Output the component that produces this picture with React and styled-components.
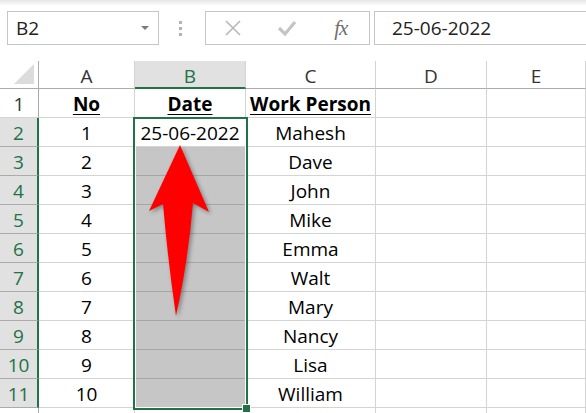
import React from "react";
import styled, { createGlobalStyle } from "styled-components";

const GlobalStyle = createGlobalStyle`
  html, body {
    margin: 0;
    padding: 0;
    background: #fff;
  }
  body {
    width: 586px;
    height: 413px;
    overflow: hidden;
    font-family: "Open Sans", Lato, sans-serif;
  }
`;

const GREEN = "#217346";
const GRID = "#d4d4d4";

const Page = styled.div`
  position: relative;
  width: 586px;
  height: 413px;
  overflow: hidden;
  background: linear-gradient(#e6e6e6 0px, #fff 6px);
`;

/* formula bar */
const Toolbar = styled.div`
  display: flex;
  align-items: center;
  height: 61px;
  padding: 0 0 5px 7px;
  box-sizing: border-box;
`;

const NameBox = styled.div`
  display: flex;
  align-items: center;
  justify-content: space-between;
  width: 152px;
  height: 34px;
  box-sizing: border-box;
  border: 1px solid #c6c6c6;
  background: #fff;
  padding: 0 9px 0 8px;
  font-size: 19px;
  color: #222;
`;

const Caret = styled.span`
  width: 0;
  height: 0;
  border-left: 4px solid transparent;
  border-right: 4px solid transparent;
  border-top: 4px solid #7a7a7a;
`;

const Grip = styled.div`
  display: flex;
  flex-direction: column;
  gap: 3px;
  margin: 0 23px 0 20px;
  span {
    width: 3px;
    height: 3px;
    background: #b2b2b2;
  }
`;

const ActionBox = styled.div`
  display: flex;
  align-items: center;
  width: 165px;
  height: 34px;
  box-sizing: border-box;
  border: 1px solid #c6c6c6;
  background: #fff;
`;

const Action = styled.div`
  flex: 1;
  display: flex;
  align-items: center;
  justify-content: center;
`;

const Fx = styled.span`
  font-family: "Liberation Serif", serif;
  font-style: italic;
  font-size: 21px;
  color: #6f6f6f;
  letter-spacing: -1px;
  margin-right: 2px;
`;

const FormulaBox = styled.div`
  flex: 1;
  height: 34px;
  margin-left: 4px;
  box-sizing: border-box;
  border: 1px solid #c6c6c6;
  border-right: none;
  background: #fff;
  display: flex;
  align-items: center;
  padding-left: 17px;
  font-size: 19px;
  color: #222;
`;

/* sheet grid */
const Sheet = styled.div`
  display: grid;
  grid-template-columns: 39px 96px 111px 130px 111px 1fr;
  grid-template-rows: 28px repeat(12, 29px);
  background: #fff;
`;

const Corner = styled.div`
  position: relative;
  border-right: 1px solid #ababab;
  border-bottom: 1px solid #ababab;
  &::after {
    content: "";
    position: absolute;
    right: 4px;
    bottom: 4px;
    border-left: 20px solid transparent;
    border-bottom: 20px solid #dcdcdc;
  }
`;

const ColHead = styled.div`
  display: flex;
  align-items: center;
  justify-content: center;
  font-size: 19px;
  padding-top: 3px;
  box-sizing: border-box;
  color: ${(p) => (p.$active ? GREEN : "#333")};
  background: ${(p) => (p.$active ? "#e1e1e1" : "#fff")};
  border-right: 1px solid ${GRID};
  border-bottom: ${(p) => (p.$active ? `2px solid ${GREEN}` : "1px solid #ababab")};
`;

const RowHead = styled.div`
  display: flex;
  align-items: center;
  justify-content: center;
  font-size: 19px;
  padding-top: 2px;
  box-sizing: border-box;
  color: ${(p) => (p.$active ? GREEN : "#333")};
  background: ${(p) => (p.$active ? "#e1e1e1" : "#fff")};
  border-right: ${(p) => (p.$active ? `2px solid ${GREEN}` : "1px solid #ababab")};
  border-bottom: 1px solid ${(p) => (p.$active ? "#ababab" : GRID)};
`;

const Cell = styled.div`
  display: flex;
  align-items: center;
  justify-content: center;
  font-size: 19px;
  padding-top: 2px;
  box-sizing: border-box;
  color: #000;
  background: ${(p) => (p.$shaded ? "#c6c6c6" : "#fff")};
  border-right: 1px solid ${GRID};
  border-bottom: 1px solid ${(p) => (p.$shaded ? "#a6a6a6" : GRID)};
  white-space: nowrap;
  overflow: hidden;
  font-weight: ${(p) => (p.$head ? 700 : 400)};
  text-decoration: ${(p) => (p.$head ? "underline" : "none")};
  text-underline-offset: 3px;
  text-decoration-thickness: 1px;
`;

/* selection outline and fill handle sit over the cells */
const Selection = styled.div`
  position: absolute;
  left: 133px;
  top: 117px;
  width: 115px;
  height: 293px;
  box-sizing: border-box;
  border: 2px solid ${GREEN};
  box-shadow: inset 0 0 0 1px #fff;
  pointer-events: none;
`;

const Handle = styled.div`
  position: absolute;
  right: -5px;
  bottom: -5px;
  width: 7px;
  height: 7px;
  background: ${GREEN};
  border: 1px solid #fff;
`;

const Overlay = styled.svg`
  position: absolute;
  left: 0;
  top: 0;
  pointer-events: none;
  filter: drop-shadow(2px 2px 2px rgba(0, 0, 0, 0.35));
`;

const columns = ["A", "B", "C", "D", "E"];
const people = [
  ["1", "25-06-2022", "Mahesh"],
  ["2", "", "Dave"],
  ["3", "", "John"],
  ["4", "", "Mike"],
  ["5", "", "Emma"],
  ["6", "", "Walt"],
  ["7", "", "Mary"],
  ["8", "", "Nancy"],
  ["9", "", "Lisa"],
  ["10", "", "William"],
];

export default function App() {
  return (
    <Page>
      <GlobalStyle />
      <Toolbar>
        <NameBox>
          B2
          <Caret />
        </NameBox>
        <Grip>
          <span />
          <span />
          <span />
        </Grip>
        <ActionBox>
          <Action>
            <svg width="18" height="18" viewBox="0 0 18 18">
              <path d="M2 2 L16 16 M16 2 L2 16" stroke="#b8b8b8" strokeWidth="1.6" />
            </svg>
          </Action>
          <Action>
            <svg width="20" height="18" viewBox="0 0 20 18">
              <path d="M2 9 L8 15 L18 3" fill="none" stroke="#c4c4c4" strokeWidth="3.2" />
            </svg>
          </Action>
          <Action>
            <Fx>fx</Fx>
          </Action>
        </ActionBox>
        <FormulaBox>25-06-2022</FormulaBox>
      </Toolbar>

      <Sheet>
        <Corner />
        {columns.map((c) => (
          <ColHead key={c} $active={c === "B"}>
            {c}
          </ColHead>
        ))}

        <RowHead>1</RowHead>
        <Cell $head>No</Cell>
        <Cell $head>Date</Cell>
        <Cell $head>Work Person</Cell>
        <Cell />
        <Cell />

        {people.map(([no, date, name], i) => {
          const row = i + 2;
          return (
            <React.Fragment key={row}>
              <RowHead $active>{row}</RowHead>
              <Cell>{no}</Cell>
              <Cell $shaded={row > 2}>{date}</Cell>
              <Cell>{name}</Cell>
              <Cell />
              <Cell />
            </React.Fragment>
          );
        })}

        {/* partly visible row below the data */}
        <RowHead />
        <Cell />
        <Cell />
        <Cell />
        <Cell />
        <Cell />
      </Sheet>

      <Selection>
        <Handle />
      </Selection>

      <Overlay width="586" height="413" viewBox="0 0 586 413">
        <path
          d="M180 145 L209 212 L193 203 Q188 262 176 316 Q168 262 163 204 L149 211 Z"
          fill="#ff0000"
        />
      </Overlay>
    </Page>
  );
}
